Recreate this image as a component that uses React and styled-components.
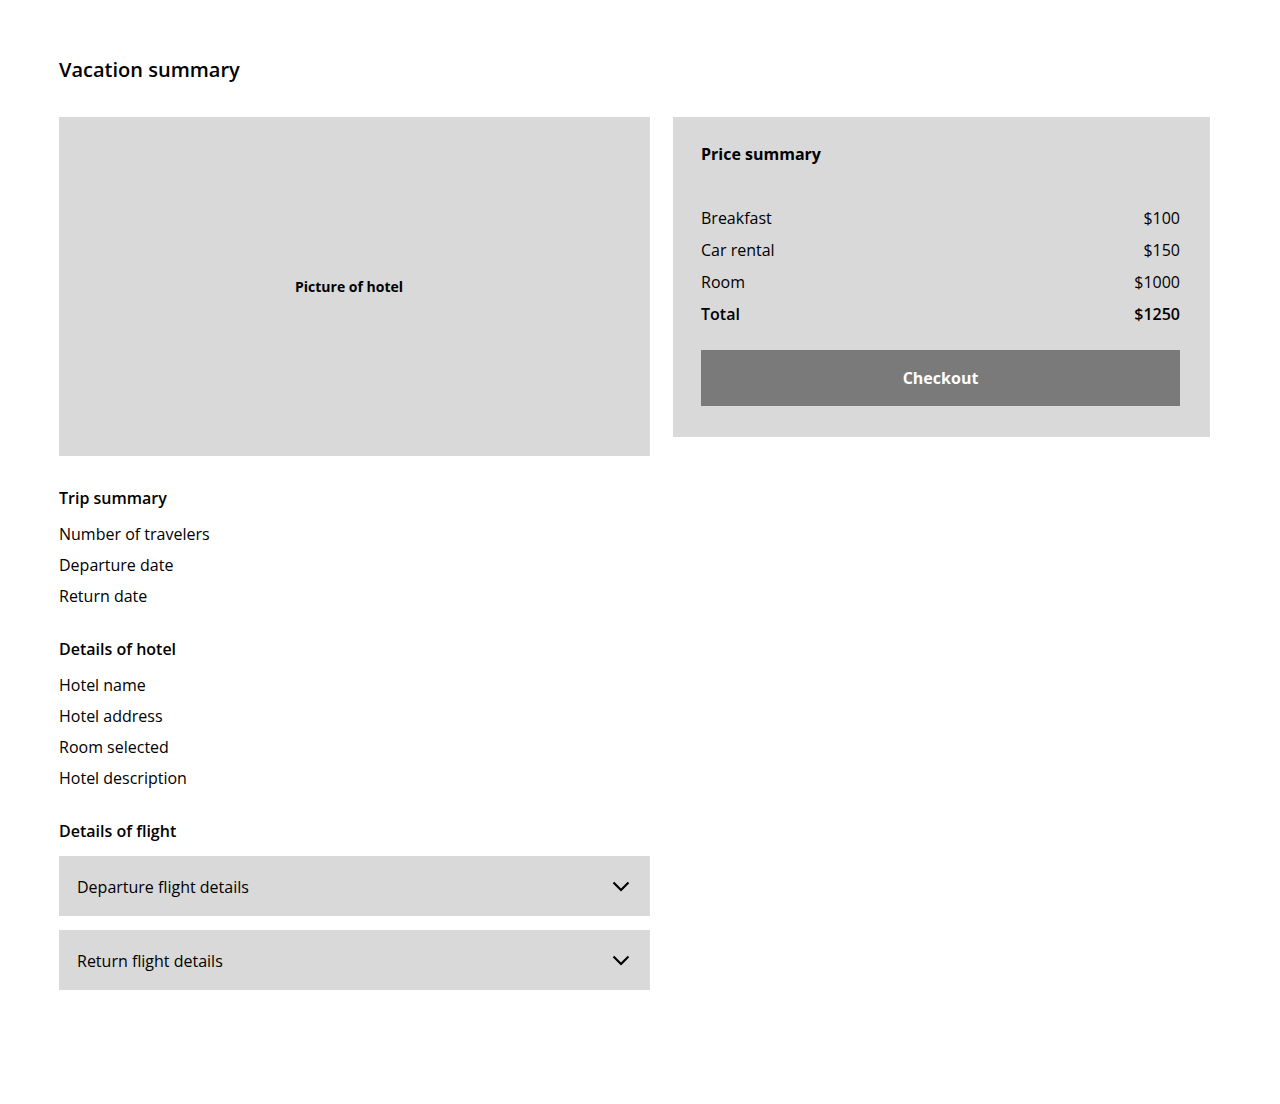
import React from "react";
import styled, { createGlobalStyle } from "styled-components";

const Global = createGlobalStyle`
  html, body { margin: 0; padding: 0; background: #fff; }
  body { font-family: "Open Sans", "Noto Sans", sans-serif; color: #000; }
  * { box-sizing: border-box; }
`;

const Page = styled.div`
  width: 1280px;
  padding: 56px 70px 60px 59px;
`;

const Title = styled.h1`
  margin: 0 0 33px;
  font-size: 20px;
  line-height: 28px;
  font-weight: 600;
`;

const Columns = styled.div`
  display: grid;
  grid-template-columns: 591px 537px;
  column-gap: 23px;
  align-items: start;
`;

const LeftCol = styled.div`
  display: flex;
  flex-direction: column;
`;

const Picture = styled.div`
  height: 339px;
  background: #d9d9d9;
  display: flex;
  align-items: center;
  justify-content: center;
  padding-right: 11px;
  font-size: 14px;
  font-weight: 700;
  margin-bottom: 30px;
`;

const Section = styled.section`
  display: flex;
  flex-direction: column;
  margin-bottom: ${(p) => p.$mb ?? 25}px;
`;

const SectionHeading = styled.h2`
  margin: 0 0 ${(p) => p.$mb ?? 9}px;
  font-size: 16px;
  line-height: 24px;
  font-weight: 600;
`;

const Item = styled.div`
  font-size: 16px;
  line-height: 31px;
`;

const Accordion = styled.div`
  display: flex;
  flex-direction: column;
  gap: 14px;
`;

const AccordionHeader = styled.button`
  all: unset;
  box-sizing: border-box;
  height: 60px;
  background: #d9d9d9;
  display: flex;
  align-items: center;
  justify-content: space-between;
  padding: 1px 20px 0 18px;
  font-family: "Open Sans", "Noto Sans", sans-serif;
  font-size: 16px;
  cursor: pointer;
`;

const Chevron = styled.svg`
  width: 18px;
  height: 11px;
  display: block;
  margin-top: -1px;
`;

const PriceCard = styled.div`
  background: #d9d9d9;
  padding: 27px 30px 31px 28px;
  display: flex;
  flex-direction: column;
`;

const CardTitle = styled.h2`
  margin: 0 0 38px;
  font-size: 16px;
  line-height: 20px;
  font-weight: 700;
`;

const PriceRow = styled.div`
  display: flex;
  justify-content: space-between;
  font-size: 16px;
  line-height: 32px;
  font-weight: ${(p) => (p.$total ? 600 : 400)};
`;

const CheckoutButton = styled.button`
  all: unset;
  box-sizing: border-box;
  margin-top: 20px;
  height: 56px;
  background: #7a7a7a;
  color: #fff;
  display: flex;
  align-items: center;
  justify-content: center;
  font-family: "Open Sans", "Noto Sans", sans-serif;
  font-size: 16px;
  font-weight: 700;
  cursor: pointer;
`;

const ChevronIcon = () => (
  <Chevron viewBox="0 0 18 11" fill="none">
    <path d="M1.5 1.5 9 9 16.5 1.5" stroke="#000" strokeWidth="2.2" />
  </Chevron>
);

const prices = [
  ["Breakfast", "$100"],
  ["Car rental", "$150"],
  ["Room", "$1000"],
];

export default function App() {
  return (
    <Page>
      <Global />
      <Title>Vacation summary</Title>
      <Columns>
        <LeftCol>
          <Picture>Picture of hotel</Picture>
          <Section>
            <SectionHeading>Trip summary</SectionHeading>
            <Item>Number of travelers</Item>
            <Item>Departure date</Item>
            <Item>Return date</Item>
          </Section>
          <Section>
            <SectionHeading>Details of hotel</SectionHeading>
            <Item>Hotel name</Item>
            <Item>Hotel address</Item>
            <Item>Room selected</Item>
            <Item>Hotel description</Item>
          </Section>
          <Section $mb={0}>
            <SectionHeading $mb={13}>Details of flight</SectionHeading>
            <Accordion>
              <AccordionHeader>
                Departure flight details
                <ChevronIcon />
              </AccordionHeader>
              <AccordionHeader>
                Return flight details
                <ChevronIcon />
              </AccordionHeader>
            </Accordion>
          </Section>
        </LeftCol>
        <PriceCard>
          <CardTitle>Price summary</CardTitle>
          {prices.map(([k, v]) => (
            <PriceRow key={k}>
              <span>{k}</span>
              <span>{v}</span>
            </PriceRow>
          ))}
          <PriceRow $total>
            <span>Total</span>
            <span>$1250</span>
          </PriceRow>
          <CheckoutButton>Checkout</CheckoutButton>
        </PriceCard>
      </Columns>
    </Page>
  );
}
